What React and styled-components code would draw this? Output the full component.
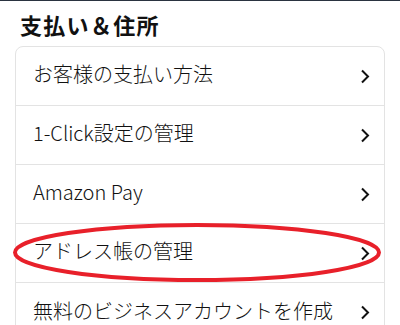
import React from "react";
import styled, { createGlobalStyle } from "styled-components";

const GlobalStyle = createGlobalStyle`
  body {
    margin: 0;
    background: #ffffff;
    font-family: "Noto Sans CJK JP", sans-serif;
    color: #111111;
  }
`;

const items = [
  { label: "お客様の支払い方法" },
  { label: "1-Click設定の管理" },
  { label: "Amazon Pay" },
  { label: "アドレス帳の管理", marked: true },
  { label: "無料のビジネスアカウントを作成" },
];

const App = () => {
  return (
    <>
      <GlobalStyle />
      <Page>
        <Title>支払い＆住所</Title>
        <Card>
          {items.map((item) => (
            <Row key={item.label}>
              <Label>{item.label}</Label>
              <Chevron width="10" height="15" viewBox="0 0 10 15">
                <path d="M2 1.5 L8 7.5 L2 13.5" fill="none" stroke="#111" strokeWidth="2" />
              </Chevron>
              {item.marked && (
                <Mark width="370" height="61" viewBox="0 0 370 61">
                  <ellipse cx="185" cy="30.5" rx="182" ry="27.5" fill="none" stroke="#e8202a" strokeWidth="4" />
                </Mark>
              )}
            </Row>
          ))}
        </Card>
      </Page>
    </>
  );
};

export default App;

const Page = styled.div`
  border-top: 1px solid #2a3340;
  height: 324px;
  overflow: hidden;
`;

const Title = styled.h2`
  margin: 0;
  padding: 9px 0 0 20px;
  height: 36px;
  font-size: 22px;
  font-weight: 700;
  line-height: 28px;
  letter-spacing: 1.3px;
`;

const Card = styled.div`
  margin: 0 15px;
  border: 1px solid #e3e3e3;
  border-radius: 8px;
`;

const Row = styled.div`
  position: relative;
  box-sizing: border-box;
  height: 59px;
  display: flex;
  align-items: center;
  justify-content: space-between;
  padding: 0 14px 4px 17px;
  border-bottom: 1px solid #e3e3e3;

  &:last-child {
    border-bottom: none;
  }
`;

const Label = styled.span`
  font-size: 20px;
  line-height: 24px;
  font-weight: 300;
  color: #111111;
`;

const Chevron = styled.svg`
  margin-top: 4px;
`;

const Mark = styled.svg`
  position: absolute;
  left: -4px;
  top: -2px;
  pointer-events: none;
`;
